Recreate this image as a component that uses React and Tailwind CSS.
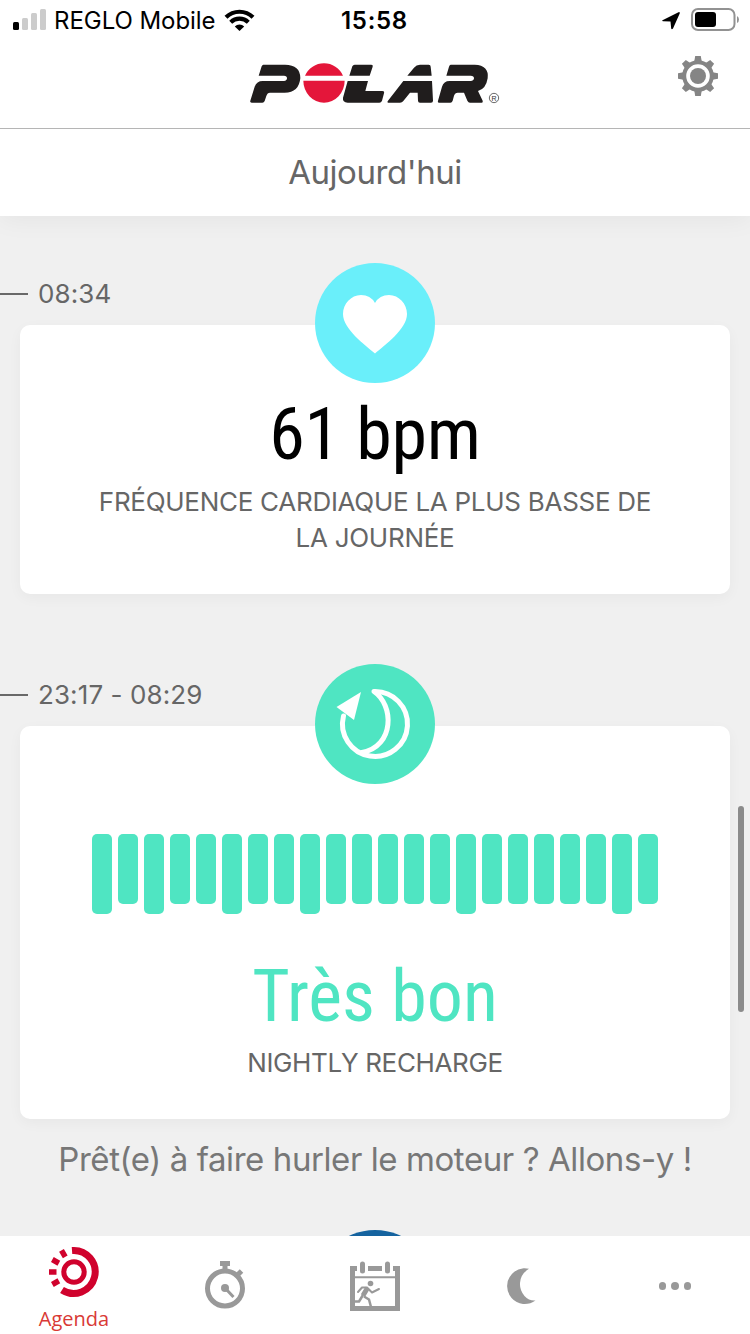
import React from "react";

const BARS = [80, 70, 80, 70, 70, 80, 70, 70, 80, 70, 70, 70, 70, 70, 80, 70, 70, 70, 70, 70, 80, 70];

function StatusBar() {
  return (
    <div className="flex h-10 shrink-0 items-center px-[13px] text-black">
      <div className="flex w-[328px] items-center">
        <svg className="h-10 w-[34px]" viewBox="0 0 34 40">
          <rect x="0" y="22" width="6" height="8" rx="1.5" fill="#000" />
          <rect x="9" y="18" width="6" height="12" rx="1.5" fill="#ccc" />
          <rect x="18" y="13" width="6" height="17" rx="1.5" fill="#ccc" />
          <rect x="27" y="9" width="6" height="21" rx="1.5" fill="#ccc" />
        </svg>
        <span className="ml-[7px] w-[163px] whitespace-nowrap pt-[2px] text-[24px] tracking-[-0.05px]">REGLO Mobile</span>
        <svg className="ml-[7px] h-10 w-[31px]" viewBox="0 0 31 40">
          <g fill="none" stroke="#000" strokeWidth="4.2">
            <path d="M2 17.2A19.5 19.5 0 0 1 29 17.2" />
            <path d="M6.7 22.2A12.7 12.7 0 0 1 24.3 22.2" />
          </g>
          <path d="M15.5 31L10.8 26.4A6.7 6.7 0 0 1 20.2 26.4Z" />
        </svg>
      </div>
      <span className="whitespace-nowrap pt-[2px] text-[24px] font-semibold tracking-[0.7px]">15:58</span>
      <svg className="ml-auto -mr-[13px] h-10 w-[90px]" viewBox="0 0 90 40">
        <path d="M2.500 20.200L18.500 12.200Q20.300 11.700 19.700 13.600L13 28.500Q11.800 30 11.200 28.500L10.500 21.600L3.200 21.200Q1.400 21 2.500 20.200Z" />
        <rect x="32" y="9" width="42.5" height="21" rx="6" fill="none" stroke="#929292" strokeWidth="2" />
        <rect x="35" y="12" width="21" height="15" rx="3" />
        <path d="M77 16Q79 17 79 19.5T77 23Z" fill="#929292" />
      </svg>
    </div>
  );
}

function PolarLogo() {
  return (
    <svg className="h-[65px] w-[270px]" viewBox="0 0 810 195">
      <g fill="#201d1d">
        <path d="M70 44H135Q181 45 181 84Q177 129 132 128H90Q82 128 79 138L74 153Q72 158 67 158H35Q29 158 31 152L44 110Q50 93 68 93H132Q141 92 141 85Q141 77 132 77H56L65 49Q67 44 70 44Z" />
        <path d="M344 44H394Q400 44 398 50L389 77H328L337 49Q339 44 344 44ZM323 93H384L376 123H427Q434 123 432 130L426 152Q424 158 418 158H323Q307 157 309 143Z" />
        <path d="M540 44H566Q572 44 572 50L575 77H502L522 53Q529 44 540 44ZM490 93H576L579 152Q579 158 573 158H540Q534 158 534 152L533 128H510L490 153Q486 158 480 158H444Q440 157 444 152Z" />
        <path d="M632 44H704Q748 46 743 85Q738 117 714 123L728 152Q730 158 725 158H690Q685 158 682 152L672 128H653Q645 128 642 137L638 152Q636 158 631 158H599Q592 158 594 152L606 110Q611 93 629 93H692Q702 92 702 85Q702 77 692 77H619L627 50Q629 44 632 44Z" />
      </g>
      <path fill="#e4163a" d="M195 77A62 61 0 0 1 309 77ZM190 92H314A62 66 0 0 1 190 92Z" />
      <circle cx="762" cy="144" r="14" fill="none" stroke="#333" strokeWidth="2.2" />
      <text x="762" y="151.500" textAnchor="middle" fontSize="21" fill="#333" fontFamily="Liberation Sans, sans-serif">R</text>
    </svg>
  );
}

function Gear() {
  return (
    <svg className="h-[42px] w-[42px]" viewBox="-21 -21 42 42">
      <g fill="#858585">
        {[0, 45, 90, 135, 180, 225, 270, 315].map((a) => (
          <path key={a} transform={"rotate(" + a + ")"} d="M-4 -13L-2.800 -20H2.800L4 -13Z" />
        ))}
        <circle r="8" />
      </g>
      <circle r="13.800" fill="none" stroke="#858585" strokeWidth="4" />
    </svg>
  );
}

function TimeLabel({ children }) {
  return (
    <div className="flex h-8 items-center">
      <div className="h-0.5 w-7 bg-[#696969]" />
      <span className="ml-[10px] whitespace-nowrap text-[26px] leading-8 tracking-[0.1px] text-[#666]">{children}</span>
    </div>
  );
}

function Badge({ color, children }) {
  return (
    <div className={"absolute -top-[62px] left-[295px] h-[120px] w-[120px] rounded-full " + color}>
      <svg className="h-full w-full" viewBox="0 0 120 120">{children}</svg>
    </div>
  );
}

function TabBar() {
  return (
    <nav className="relative grid h-[98px] shrink-0 grid-cols-5 bg-white">
      <div className="flex w-[148px] flex-col items-center pt-[9px]">
        <svg className="h-[54px] w-[54px]" viewBox="-27 -27 54 54" fill="none" stroke="#d0022d">
          <circle r="10.200" strokeWidth="5" />
          <path d="M-2 -21.500A21.500 21.500 0 1 1 -12 18" strokeWidth="7" />
          <g strokeWidth="5.500">
            <path d="M-25 0H-17.500" />
            <path d="M-25 0H-17.500" transform="rotate(30)" />
            <path d="M-25 0H-17.500" transform="rotate(60)" />
            <path d="M-25 0H-17.500" transform="rotate(-30)" />
          </g>
        </svg>
        <span className="mt-[6px] font-['Open_Sans',sans-serif] text-[20px] leading-7 text-[#d93a36]">Agenda</span>
      </div>
      <div className="flex justify-center pt-[24px]">
        <svg className="h-[50px] w-[42px]" viewBox="0 0 42 50" fill="none" stroke="#999">
          <circle cx="21" cy="28.500" r="17.500" strokeWidth="5" />
          <path d="M16 3.500H26" strokeWidth="5" />
          <path d="M21 5V11" strokeWidth="5" />
          <path d="M33 15.500L37.500 11" strokeWidth="5" />
          <path d="M21 28L29.500 37" strokeWidth="3" />
          <circle cx="21" cy="28" r="4" fill="#999" stroke="none" />
        </svg>
      </div>
      <div className="flex justify-center pt-[24px]">
        <svg className="h-[52px] w-[50px]" viewBox="0 0 50 52" fill="none" stroke="#999">
          <path d="M7 8.500H2.500V48.500H47.500V8.500H43" strokeWidth="5" />
          <path d="M18 8.500H32" strokeWidth="5" />
          <path d="M12.500 4V11M37.500 4V11" strokeWidth="5" strokeLinecap="round" />
          <path d="M3 17.200H47" strokeWidth="2" />
          <circle cx="20.500" cy="23.500" r="2.800" fill="#999" stroke="none" />
          <path d="M8 32L12 27.500H17L22 32.500L29 29" strokeWidth="2" strokeLinecap="round" strokeLinejoin="round" />
          <path d="M17.500 28L13 35.500" strokeWidth="5" strokeLinejoin="round" />
          <path d="M13 35L9 41.500H3M14 36.500L19 39.500L21 47" strokeWidth="2.500" strokeLinejoin="round" />
        </svg>
      </div>
      <div className="flex justify-center pt-[31px] pr-[2px]">
        <svg className="h-[38px] w-[38px]" viewBox="0 0 38 38" fill="#999">
          <path d="M24 1.800Q21 1 18.500 1.200A18 18 0 0 0 18 37Q25 37.500 30.500 33.500Q24 34 19.500 29Q14.500 23 15 16Q15.500 7 24 1.800Z" />
        </svg>
      </div>
      <div className="flex items-center justify-center gap-[5px] pt-[2px]">
        <i className="h-[7.500px] w-[7.500px] rounded-full bg-[#999]" />
        <i className="h-[7.500px] w-[7.500px] rounded-full bg-[#999]" />
        <i className="h-[7.500px] w-[7.500px] rounded-full bg-[#999]" />
      </div>
    </nav>
  );
}

export default function App() {
  return (
    <div className="relative flex h-[1334px] w-[750px] flex-col overflow-hidden bg-[#f0f0f0] font-['Inter',sans-serif]">
      <div className="relative z-10 bg-white shadow-[0_4px_24px_rgba(0,0,0,0.05)]">
        <StatusBar />
        <header className="grid h-[89px] grid-cols-[240px_270px_240px] border-b border-[#b5b5b5]">
          <div />
          <div className="pt-[10px]"><PolarLogo /></div>
          <div className="flex justify-end pt-[15px] pr-[31px]"><Gear /></div>
        </header>
        <div className="flex h-[87px] items-center justify-center">
          <span className="whitespace-nowrap text-[33px] tracking-[-0.45px] text-[#666]">Aujourd'hui</span>
        </div>
      </div>

      <main className="h-[1020px] overflow-hidden">
        <section className="pt-[62px]">
          <TimeLabel>08:34</TimeLabel>
          <article className="relative mx-5 mt-[15px] flex h-[269px] flex-col items-center rounded-[10px] bg-white pt-[66px] shadow-[0_4px_14px_rgba(0,0,0,0.04)]">
            <Badge color="bg-[#6aeffa]">
              <path fill="#fff" d="M60 90.500C50 82 28 66 28 51C28 41 36 32 46 32Q55.500 32 60 40Q64.500 32 74 32C84 32 92 41 92 51C92 66 70 82 60 90.500Z" />
            </Badge>
            <div className="whitespace-nowrap font-['Roboto_Condensed','Roboto',sans-serif] text-[72px] leading-[88px] tracking-[-0.2px] text-black [font-stretch:75%]">61 bpm</div>
            <p className="mt-[5px] text-center text-[26px] leading-9 tracking-[-0.28px] text-[#666]">
              FRÉQUENCE CARDIAQUE LA PLUS BASSE DE<br />LA JOURNÉE
            </p>
          </article>
        </section>
        <section className="pt-[85px]">
          <TimeLabel>23:17 - 08:29</TimeLabel>
          <article className="relative mx-5 mt-[15px] flex h-[393px] flex-col items-center rounded-[10px] bg-white pt-[108px] shadow-[0_4px_14px_rgba(0,0,0,0.04)]">
            <Badge color="bg-[#4fe5c2]">
              <g fill="none" stroke="#fff" strokeWidth="5" strokeLinejoin="round" strokeLinecap="round">
                <path d="M28.500 52A32.500 32.500 0 1 0 59 27.500C79 41 80 82 47 88.500" />
              </g>
              <path fill="#fff" d="M46 28L21.500 43L39 56Z" />
            </Badge>
            <div className="flex h-20 items-start gap-[6px]">
              {BARS.map((h, i) => (
                <div key={i} className="w-5 rounded-[5px] bg-[#4fe5c2]" style={{ height: h }} />
              ))}
            </div>
            <div className="mt-[39px] whitespace-nowrap font-['Roboto_Condensed','Roboto',sans-serif] text-[72px] leading-[88px] text-[#4fe5c2] [font-stretch:75%]">Très bon</div>
            <p className="mt-[4px] whitespace-nowrap text-[26px] leading-9 tracking-[-0.35px] text-[#666]">NIGHTLY RECHARGE</p>
          </article>
          <p className="mt-[19px] whitespace-nowrap text-center text-[33px] leading-[42px] tracking-[-0.42px] text-[#777]">Prêt(e) à faire hurler le moteur ? Allons-y !</p>
        </section>
        <div className="mx-auto mt-[50px] h-[120px] w-[120px] rounded-full bg-[#15639f]" />
      </main>
      <TabBar />
      <div className="absolute top-[806px] right-[6px] h-[206px] w-[6px] rounded-full bg-[#8b8b8b]" />
    </div>
  );
}
